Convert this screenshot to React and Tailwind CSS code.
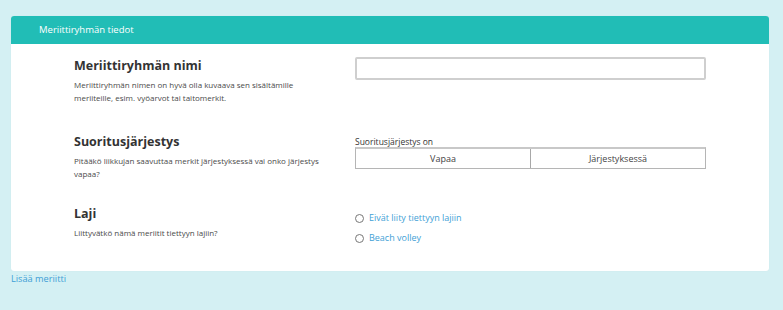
import React from "react";

const font = { fontFamily: '"Open Sans", "Noto Sans", sans-serif' };

function Heading({ title, desc }) {
  return (
    <div className="w-[281px] shrink-0">
      <div className="text-[12.5px] leading-[18px] font-bold text-[#333333]">{title}</div>
      <div className="mt-[3px] max-w-[246px] text-[8px] leading-[13px] text-[#4a4a4a]">{desc}</div>
    </div>
  );
}

function Radio({ label }) {
  return (
    <label className="flex items-center gap-[5px] h-[20px]">
      <span className="w-[9px] h-[9px] rounded-full border border-[#777777] bg-white shrink-0" />
      <span className="text-[9px] leading-[12px] text-[#3f9fd6]">{label}</span>
    </label>
  );
}

export default function App() {
  return (
    <div className="w-[783px] h-[310px] bg-[#d4f0f3] pt-[16px]" style={font}>
      <div className="ml-[11px] w-[758px] bg-white rounded-[3px] overflow-hidden shadow-[0_0_1px_rgba(0,0,0,0.08)]">
        <div className="h-[28px] bg-[#21bdb6] flex items-center pl-[28px] pt-[1px]">
          <span className="text-[9.5px] text-white">Meriittiryhmän tiedot</span>
        </div>
        <div className="pt-[13px] px-[63px] pb-[23px]">
          <div className="flex h-[76px]">
            <Heading
              title="Meriittiryhmän nimi"
              desc="Meriittiryhmän nimen on hyvä olla kuvaava sen sisältämille meriiteille, esim. vyöarvot tai taitomerkit."
            />
            <div className="w-[351px]">
              <input
                type="text"
                className="block w-full h-[23px] border-2 border-[#cfcfcf] rounded-[2px] outline-none px-2 text-[10px]"
              />
            </div>
          </div>
          <div className="flex h-[72px]">
            <Heading
              title="Suoritusjärjestys"
              desc="Pitääkö liikkujan saavuttaa merkit järjestyksessä vai onko järjestys vapaa?"
            />
            <div className="w-[351px] pt-[3px]">
              <div className="text-[8.5px] leading-[11px] text-[#333333]">Suoritusjärjestys on</div>
              <div className="flex h-[22px] border border-[#b5b5b5] border-t-2 border-t-[#c8c8c8]">
                <div className="flex-1 flex items-center justify-center text-[9px] text-[#444444] border-r border-[#a8a8a8]">
                  Vapaa
                </div>
                <div className="flex-1 flex items-center justify-center text-[9px] text-[#444444]">
                  Järjestyksessä
                </div>
              </div>
            </div>
          </div>
          <div className="flex">
            <Heading title="Laji" desc="Liittyvätkö nämä meriitit tiettyyn lajiin?" />
            <div className="w-[351px] pt-[3px]">
              <Radio label="Eivät liity tiettyyn lajiin" />
              <Radio label="Beach volley" />
            </div>
          </div>
        </div>
      </div>
      <div className="ml-[11px] mt-[1px] text-[9.2px] leading-[14px] text-[#3f9fd6]">Lisää meriitti</div>
    </div>
  );
}
